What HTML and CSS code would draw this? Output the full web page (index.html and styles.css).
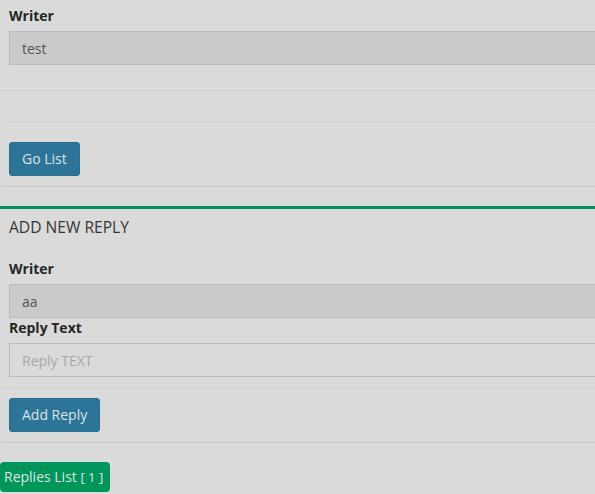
FILE: index.html
```html
<!DOCTYPE html>
<html>
<head>
<meta charset="utf-8">
<link rel="stylesheet" href="styles.css">
</head>
<body>
<div class="page">
  <div class="box box-plain">
    <div class="box-body top-body">
      <div class="form-group">
        <label class="label">Writer</label>
        <input class="input input-filled" type="text" value="test" readonly>
      </div>
    </div>
    <div class="box-footer spacer-footer">
      <hr class="rule">
    </div>
    <div class="box-footer-plain">
      <button class="btn">Go List</button>
    </div>
  </div>

  <div class="box box-success">
    <div class="box-header">
      <h3 class="box-title">ADD NEW REPLY</h3>
    </div>
    <div class="box-body reply-body">
      <label class="label">Writer</label>
      <input class="input input-filled" type="text" value="aa" readonly>
      <label class="label">Reply Text</label>
      <input class="input" type="text" placeholder="Reply TEXT">
    </div>
    <div class="box-footer">
      <button class="btn">Add Reply</button>
    </div>
  </div>

  <div class="badge-row">
    <span class="badge">Replies List <small class="count">[ 1 ]</small></span>
  </div>
</div>
</body>
</html>
```
FILE: styles.css
```css
html, body {
  margin: 0;
  padding: 0;
  background: #dadada;
  overflow: hidden;
}
body {
  font-family: "Open Sans", "DejaVu Sans", sans-serif;
  font-size: 14px;
  color: #262626;
}
.page {
  width: 100%;
}
.box {
  border-radius: 0 0 0 3px;
  border-bottom: 1px solid #c8c8c8;
  margin-bottom: 19px;
}
.box-success {
  border-top: 3px solid #00905a;
}
.box-body {
  padding: 10px 0 10px 9px;
}
.top-body {
  padding-top: 6px;
}
.form-group {
  margin-bottom: 15px;
}
.label {
  display: block;
  font-weight: 700;
  font-size: 14px;
  line-height: 20px;
  margin-bottom: 5px;
  color: #262626;
}
.input {
  display: block;
  box-sizing: border-box;
  width: 100%;
  height: 34px;
  margin: 0;
  padding: 6px 12px;
  font-family: "Open Sans", "DejaVu Sans", sans-serif;
  font-size: 14px;
  color: #555;
  background: #dadada;
  border: 1px solid #b9b9c1;
  border-right: 0;
  border-radius: 0;
  outline: none;
}
.input::placeholder {
  color: #a9a9a9;
}
.input-filled {
  background: #cacaca;
}
.box-footer {
  border-top: 1px solid #cfcfcf;
  padding: 10px 9px;
}
.spacer-footer {
  padding: 30px 0 0 9px;
}
.rule {
  margin: 0;
  border: 0;
  border-top: 1px solid #cfcfcf;
  height: 0;
}
.box-footer-plain {
  padding: 20px 9px 10px;
}
.btn {
  display: inline-block;
  height: 34px;
  padding: 0 12px;
  font-family: "Open Sans", "DejaVu Sans", sans-serif;
  font-size: 14px;
  line-height: 32px;
  color: #dde2e5;
  background: #2c7599;
  border: 1px solid #286e90;
  border-radius: 3px;
  cursor: pointer;
}
.box-header {
  padding: 10px 9px;
}
.box-title {
  margin: 0;
  font-size: 15.6px;
  line-height: 16px;
  font-weight: 400;
  color: #363636;
}
.reply-body {
  padding-top: 14px;
}
.badge-row {
  display: flex;
}
.badge {
  display: inline-block;
  height: 30px;
  line-height: 30px;
  padding: 0 7px 0 4px;
  background: #00955a;
  color: #dfe6e2;
  border-radius: 4px;
  font-size: 14px;
}
.count {
  font-size: 13px;
}
```
